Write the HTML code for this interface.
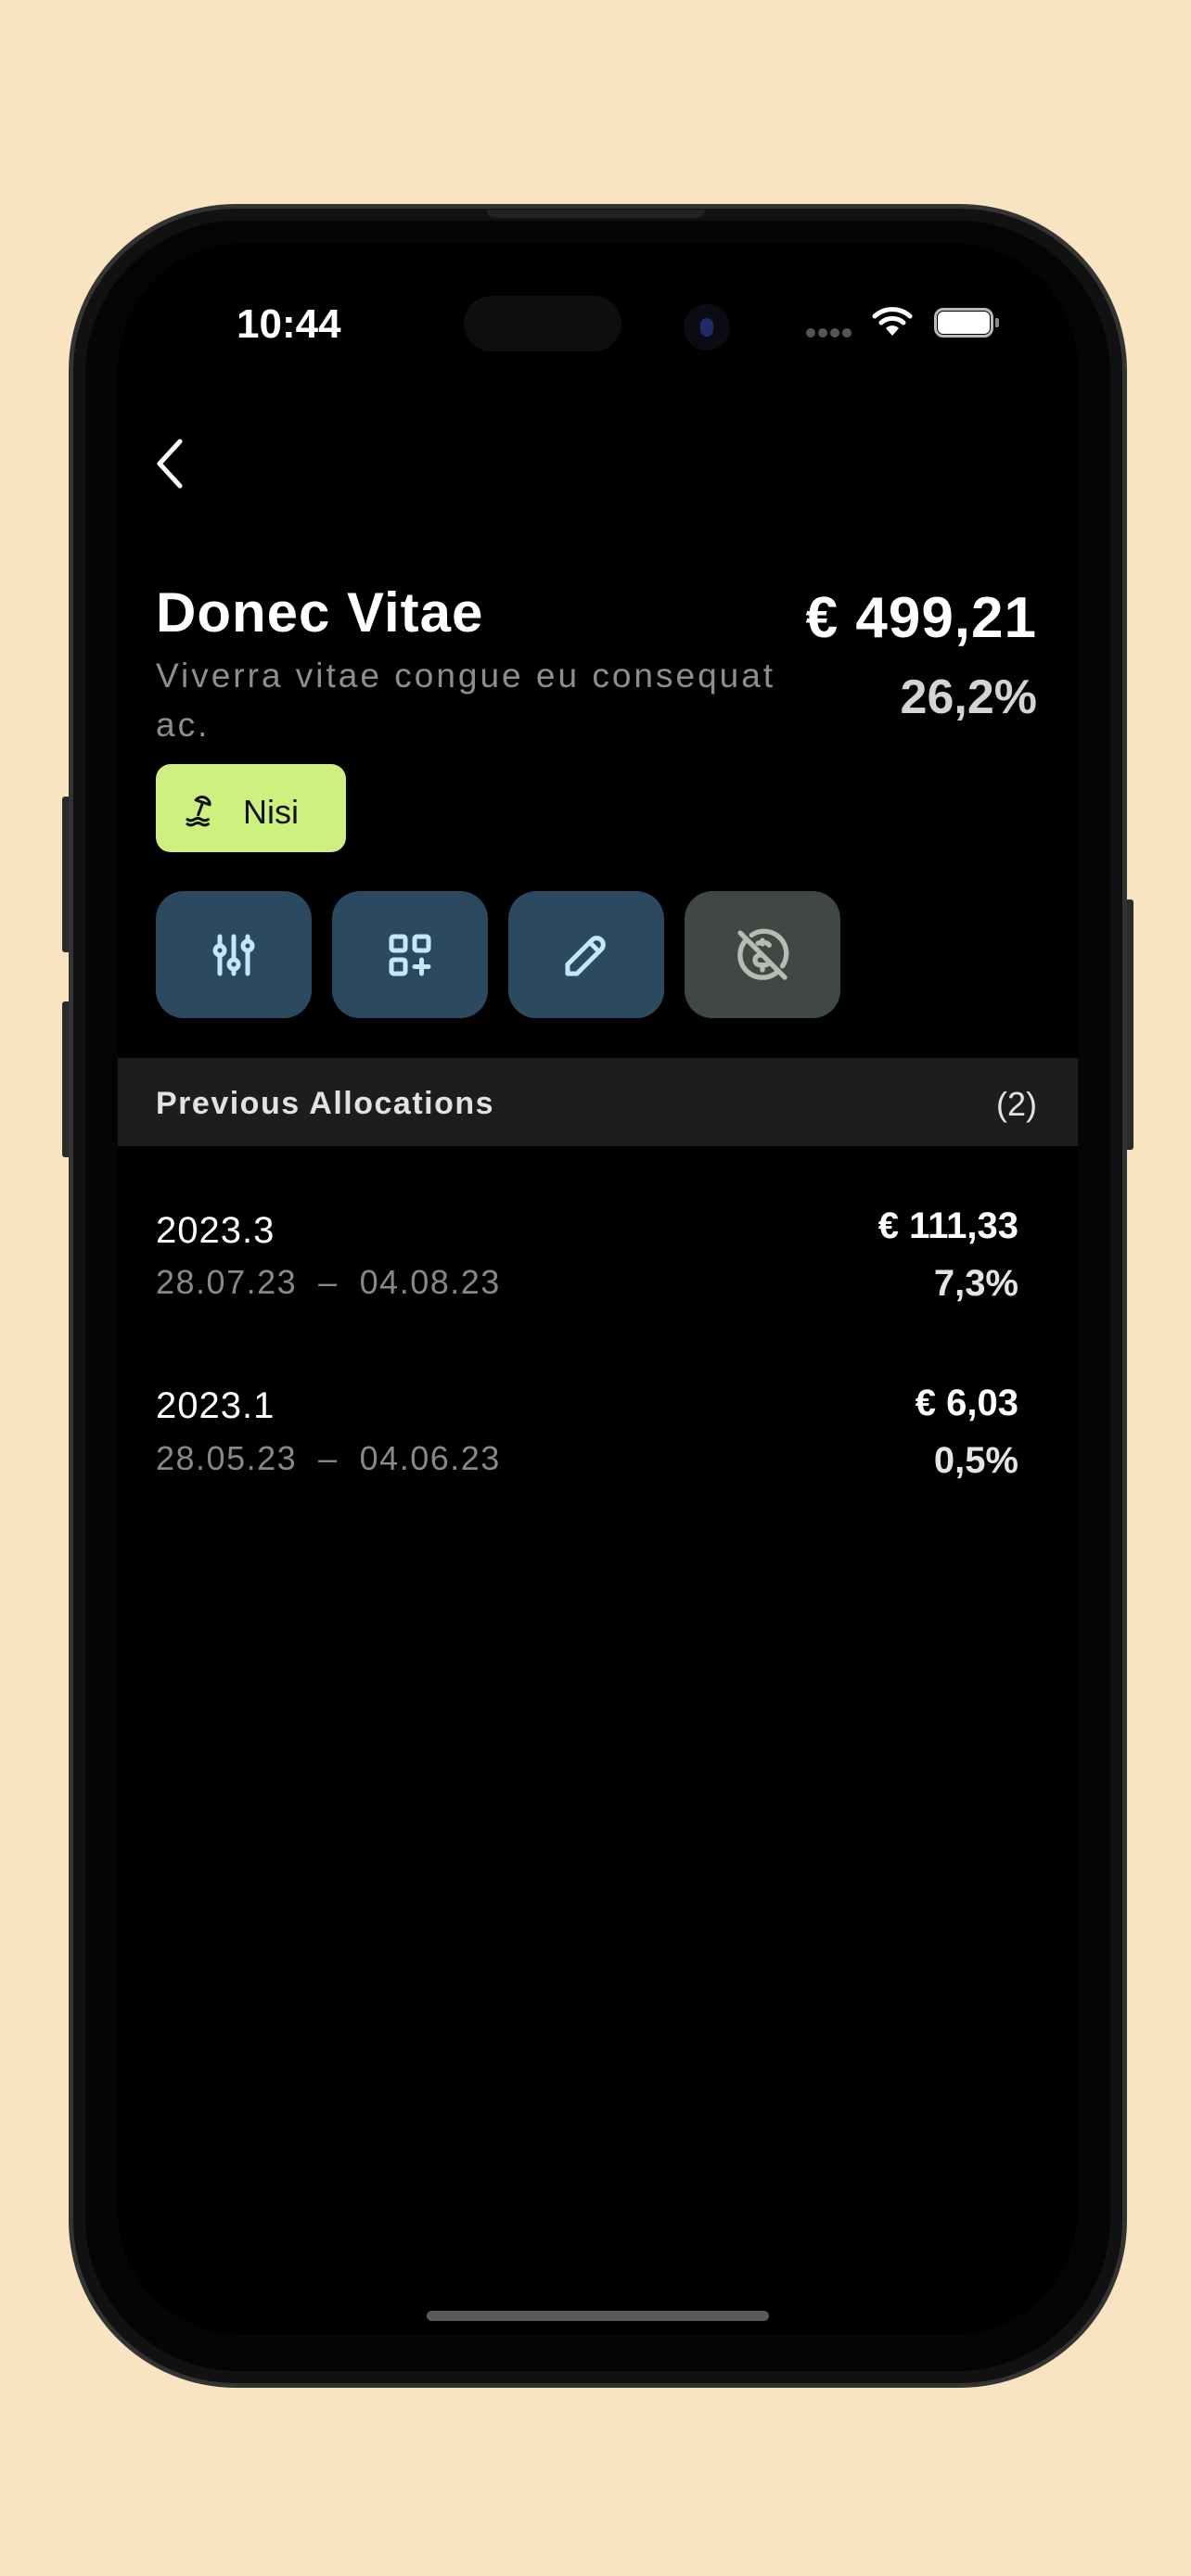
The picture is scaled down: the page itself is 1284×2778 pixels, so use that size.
<!DOCTYPE html>
<html><head><meta charset="utf-8"><style>
*{margin:0;padding:0;box-sizing:border-box}
body{width:1284px;height:2778px;background:#f9e4c2;position:relative;overflow:hidden;font-family:"Liberation Sans",sans-serif}
.a{position:absolute;line-height:1;white-space:nowrap}
.btn{position:absolute;top:961px;width:168px;height:137px;border-radius:30px;background:#2b4a60;display:flex;align-items:center;justify-content:center}
.r{text-align:right}
</style></head><body>
<div style="position:absolute;left:67px;top:859px;width:9px;height:168px;background:#2a2a2a;border-radius:3px"></div>
<div style="position:absolute;left:67px;top:1080px;width:9px;height:168px;background:#2a2a2a;border-radius:3px"></div>
<div style="position:absolute;left:1212px;top:970px;width:10px;height:270px;background:#2a2a2a;border-radius:3px"></div>
<div style="position:absolute;left:74px;top:220px;width:1141px;height:2355px;border-radius:180px;background:#333"></div>
<div style="position:absolute;left:79px;top:225px;width:1131px;height:2345px;border-radius:175px;background:#111"></div>
<div style="position:absolute;left:92px;top:238px;width:1105px;height:2319px;border-radius:165px;background:#050505"></div>
<div style="position:absolute;left:127px;top:262px;width:1035px;height:2256px;border-radius:135px;background:#000"></div>
<div style="position:absolute;left:525px;top:226px;width:235px;height:9px;border-radius:0 0 8px 8px;background:#222"></div>
<div class="a" style="left:255px;top:328px;font-size:44px;font-weight:bold;color:#fff">10:44</div>
<div style="position:absolute;left:500px;top:319px;width:170px;height:60px;border-radius:30px;background:#0e0e0e"></div>
<div style="position:absolute;left:737px;top:328px;width:50px;height:50px;border-radius:50%;background:#0b0b14"></div>
<div style="position:absolute;left:755px;top:343px;width:14px;height:20px;border-radius:7px;background:#1e2b66"></div>
<svg style="position:absolute;left:868px;top:352px" width="58" height="14"><g fill="#555"><circle cx="6" cy="7" r="5"/><circle cx="19" cy="7" r="5"/><circle cx="32" cy="7" r="5"/><circle cx="45" cy="7" r="5"/></g></svg>
<svg style="position:absolute;left:940px;top:328px" width="44" height="36" viewBox="0 0 44 36"><path d="M3 13a28 28 0 0 1 38 0" stroke="#fff" stroke-width="5" fill="none" stroke-linecap="round"/><path d="M10 20a18 18 0 0 1 24 0" stroke="#fff" stroke-width="5" fill="none" stroke-linecap="round"/><path d="M22 34l-7-8a10 10 0 0 1 14 0z" fill="#fff"/></svg>
<div style="position:absolute;left:1007px;top:332px;width:64px;height:32px;border:3px solid #bbb;border-radius:10px"></div>
<div style="position:absolute;left:1011px;top:336px;width:56px;height:24px;background:#fff;border-radius:6px"></div>
<div style="position:absolute;left:1073px;top:343px;width:4px;height:10px;background:#888;border-radius:0 2px 2px 0"></div>
<svg style="position:absolute;left:160px;top:470px" width="45" height="60" viewBox="0 0 45 60"><path d="M34 6L12 30l22 24" stroke="#fff" stroke-width="5" fill="none" stroke-linecap="round" stroke-linejoin="round"/></svg>
<div class="a" style="left:168px;top:631px;font-size:60px;font-weight:bold;color:#fff;letter-spacing:1px">Donec Vitae</div>
<div class="a r" style="right:166px;top:636px;font-size:62px;font-weight:bold;color:#fff;letter-spacing:1px">€ 499,21</div>
<div class="a" style="left:168px;top:710px;font-size:37px;color:#8b908d;letter-spacing:3px">Viverra vitae congue eu consequat</div>
<div class="a" style="left:168px;top:763px;font-size:37px;color:#8b908d;letter-spacing:3px">ac.</div>
<div class="a r" style="right:166px;top:726px;font-size:52px;font-weight:bold;color:#d4d4d4">26,2%</div>
<div style="position:absolute;left:168px;top:824px;width:205px;height:95px;border-radius:16px;background:#cdf07e"></div>
<svg style="position:absolute;left:197px;top:852px" width="40" height="40" viewBox="0 0 24 24" fill="none" stroke="#111" stroke-width="1.8" stroke-linecap="round" stroke-linejoin="round"><path d="M17.5 9.5a5 5 0 0 0-9-3l9 3z"/><path d="M13 8l-3 8"/><path d="M3 19c1.5 1 3 1 4.5 0s3-1 4.5 0 3 1 4.5 0"/><path d="M3 22c1.5 1 3 1 4.5 0s3-1 4.5 0 3 1 4.5 0"/></svg>
<div class="a" style="left:262px;top:858px;font-size:36px;color:#111">Nisi</div>
<div class="btn" style="left:168px"><svg width="60" height="60" viewBox="0 0 24 24" fill="none" stroke="#c5e6fb" stroke-width="2" stroke-linecap="round"><path d="M6 4v4M6 12v8M12 4v10M12 18v2M18 4v2M18 10v10"/><circle cx="6" cy="10" r="2"/><circle cx="12" cy="16" r="2"/><circle cx="18" cy="8" r="2"/></svg></div>
<div class="btn" style="left:358px"><svg width="60" height="60" viewBox="0 0 24 24" fill="none" stroke="#c5e6fb" stroke-width="2" stroke-linecap="round" stroke-linejoin="round"><rect x="4" y="4" width="6" height="6" rx="1"/><rect x="14" y="4" width="6" height="6" rx="1"/><rect x="4" y="14" width="6" height="6" rx="1"/><path d="M14 17h6M17 14v6"/></svg></div>
<div class="btn" style="left:548px"><svg width="60" height="60" viewBox="0 0 24 24" fill="none" stroke="#c5e6fb" stroke-width="2" stroke-linecap="round" stroke-linejoin="round"><path d="M4 20h4L18.5 9.5a2.8 2.8 0 0 0-4-4L4 16v4"/><path d="M13.5 6.5l4 4"/></svg></div>
<div class="btn" style="left:738px;background:#414843"><svg width="64" height="64" viewBox="0 0 24 24" fill="none" stroke="#b4bcb5" stroke-width="2" stroke-linecap="round" stroke-linejoin="round"><path d="M14.7 8a2 2 0 0 0-1.7-1h-2a2 2 0 0 0-.8.2M12 12h-1a2 2 0 0 0 0 0 2 2 0 0 0 0 4h2a2 2 0 0 0 1.8-1.1"/><path d="M12 6v1.5M12 16.5V18"/><path d="M18.4 18.4A9 9 0 0 1 5.6 5.6M7.6 3.9A9 9 0 0 1 20.1 16.4"/><path d="M3 3l18 18"/></svg></div>
<div style="position:absolute;left:127px;top:1141px;width:1035px;height:95px;background:#1c1e1d"></div>
<div class="a" style="left:168px;top:1173px;font-size:34px;font-weight:bold;color:#e2e2e2;letter-spacing:1.5px">Previous Allocations</div>
<div class="a r" style="right:166px;top:1173px;font-size:36px;color:#e2e2e2">(2)</div>
<div class="a" style="left:168px;top:1307px;font-size:40px;color:#fff;letter-spacing:1px">2023.3</div>
<div class="a r" style="right:186px;top:1302px;font-size:40px;font-weight:bold;color:#fff">€ 111,33</div>
<div class="a" style="left:168px;top:1365px;font-size:36px;color:#858a87;letter-spacing:1.5px">28.07.23 &nbsp;– &nbsp;04.08.23</div>
<div class="a r" style="right:186px;top:1364px;font-size:40px;font-weight:bold;color:#e4e4e4">7,3%</div>
<div class="a" style="left:168px;top:1496px;font-size:40px;color:#fff;letter-spacing:1px">2023.1</div>
<div class="a r" style="right:186px;top:1493px;font-size:40px;font-weight:bold;color:#fff">€ 6,03</div>
<div class="a" style="left:168px;top:1555px;font-size:36px;color:#858a87;letter-spacing:1.5px">28.05.23 &nbsp;– &nbsp;04.06.23</div>
<div class="a r" style="right:186px;top:1555px;font-size:40px;font-weight:bold;color:#e4e4e4">0,5%</div>
<div style="position:absolute;left:460px;top:2492px;width:369px;height:11px;border-radius:6px;background:#5a5a5a"></div>
</body></html>
